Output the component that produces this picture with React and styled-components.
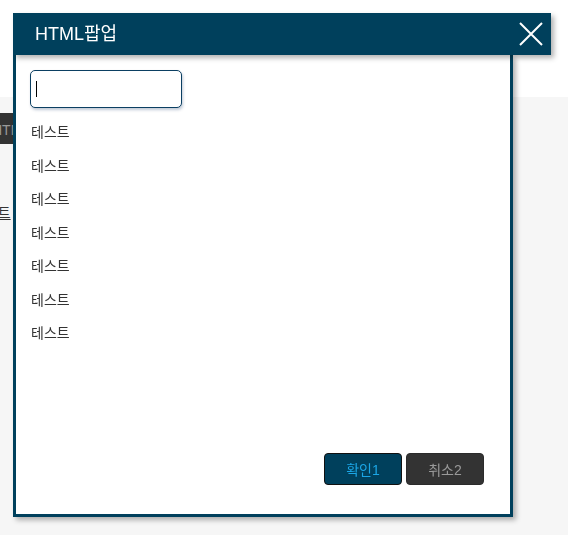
import React from 'react'
import styled, { createGlobalStyle } from 'styled-components'

const GlobalStyle = createGlobalStyle`
  html, body {
    margin: 0;
    padding: 0;
    background: #ffffff;
    font-family: "Liberation Sans", "Noto Sans CJK KR", sans-serif;
    overflow: hidden;
  }
`

const Page = styled.div`
  display: flex;
  flex-direction: column;
  min-height: 100vh;
`

const TopArea = styled.div`
  height: 97px;
  background: #fff;
`

const Main = styled.div`
  flex: 1;
  background: #f6f6f6;
  padding-top: 16px;
  display: flex;
  flex-direction: column;
  align-items: flex-start;
  gap: 58px;
`

const PageButton = styled.button`
  height: 31px;
  margin-left: -18px;
  padding: 0 10px;
  border: none;
  background: #333;
  color: #999;
  font: 14px "Liberation Sans", "Noto Sans CJK KR", sans-serif;
`

const PageLink = styled.a`
  margin-left: -28px;
  color: #333;
  font-size: 14px;
  text-decoration: underline;
`

const Popup = styled.div`
  position: fixed;
  top: 13px;
  left: 13px;
  display: flex;
  flex-direction: column;
  align-items: flex-start;
`

const Header = styled.div`
  width: 538px;
  height: 42px;
  box-sizing: border-box;
  padding: 0 8px 0 22px;
  background: #00405c;
  color: #fff;
  display: flex;
  align-items: center;
  justify-content: space-between;
  box-shadow: 3px 3px 5px rgba(0, 0, 0, 0.3);
  position: relative;
  z-index: 1;
`

const Title = styled.h1`
  margin: 0;
  font-size: 18px;
  font-weight: normal;
  line-height: 42px;
`

const CloseButton = styled.button`
  width: 24px;
  height: 24px;
  padding: 0;
  border: none;
  background: none;
  display: flex;
  cursor: pointer;
`

const Body = styled.div`
  width: 500px;
  height: 462px;
  box-sizing: border-box;
  border: 3px solid #00405c;
  border-top: none;
  background: #fff;
  padding: 15px 26px 29px 14px;
  display: flex;
  flex-direction: column;
  box-shadow: 3px 3px 5px rgba(0, 0, 0, 0.3);
`

const InputWrap = styled.div`
  position: relative;
  width: 152px;
`

const TextInput = styled.input`
  width: 152px;
  height: 38px;
  box-sizing: border-box;
  border: 1px solid #0b3f62;
  border-radius: 5px;
  padding: 0 5px;
  font-size: 14px;
  outline: none;
  caret-color: transparent;
  box-shadow: 1px 2px 3px rgba(0, 40, 90, 0.25);
`

const Caret = styled.span`
  position: absolute;
  left: 6px;
  top: 11px;
  width: 1px;
  height: 16px;
  background: #000;
  pointer-events: none;
`

const List = styled.ul`
  flex: 1;
  list-style: none;
  margin: 8px 0 0;
  padding: 0;
`

const Item = styled.li`
  height: 33.5px;
  line-height: 33.5px;
  padding-left: 1px;
  font-size: 14px;
  color: #333;
`

const Footer = styled.div`
  display: flex;
  justify-content: flex-end;
  gap: 4px;
`

const ActionButton = styled.button`
  width: 78px;
  height: 32px;
  border-radius: 4px;
  border: 1px solid ${p => (p.$primary ? '#111' : '#2b2b2b')};
  background: ${p => (p.$primary ? '#00405c' : '#333')};
  color: ${p => (p.$primary ? '#1ba6e6' : '#999')};
  font: 14px "Liberation Sans", "Noto Sans CJK KR", sans-serif;
  cursor: pointer;
`

const items = ['테스트', '테스트', '테스트', '테스트', '테스트', '테스트', '테스트']

export default function App() {
  return (
    <>
      <GlobalStyle />
      <Page>
        <TopArea />
        <Main>
          <PageButton>HTML팝업</PageButton>
          <PageLink>테스트</PageLink>
        </Main>
      </Page>
      <Popup>
        <Header>
          <Title>HTML팝업</Title>
          <CloseButton aria-label="닫기">
            <svg width="24" height="24" viewBox="0 0 24 24">
              <path d="M1 1L23 23M23 1L1 23" stroke="#fff" strokeWidth="2" fill="none" />
            </svg>
          </CloseButton>
        </Header>
        <Body>
          <InputWrap>
            <TextInput />
            <Caret />
          </InputWrap>
          <List>
            {items.map((t, i) => (
              <Item key={i}>{t}</Item>
            ))}
          </List>
          <Footer>
            <ActionButton $primary>확인1</ActionButton>
            <ActionButton>취소2</ActionButton>
          </Footer>
        </Body>
      </Popup>
    </>
  )
}
